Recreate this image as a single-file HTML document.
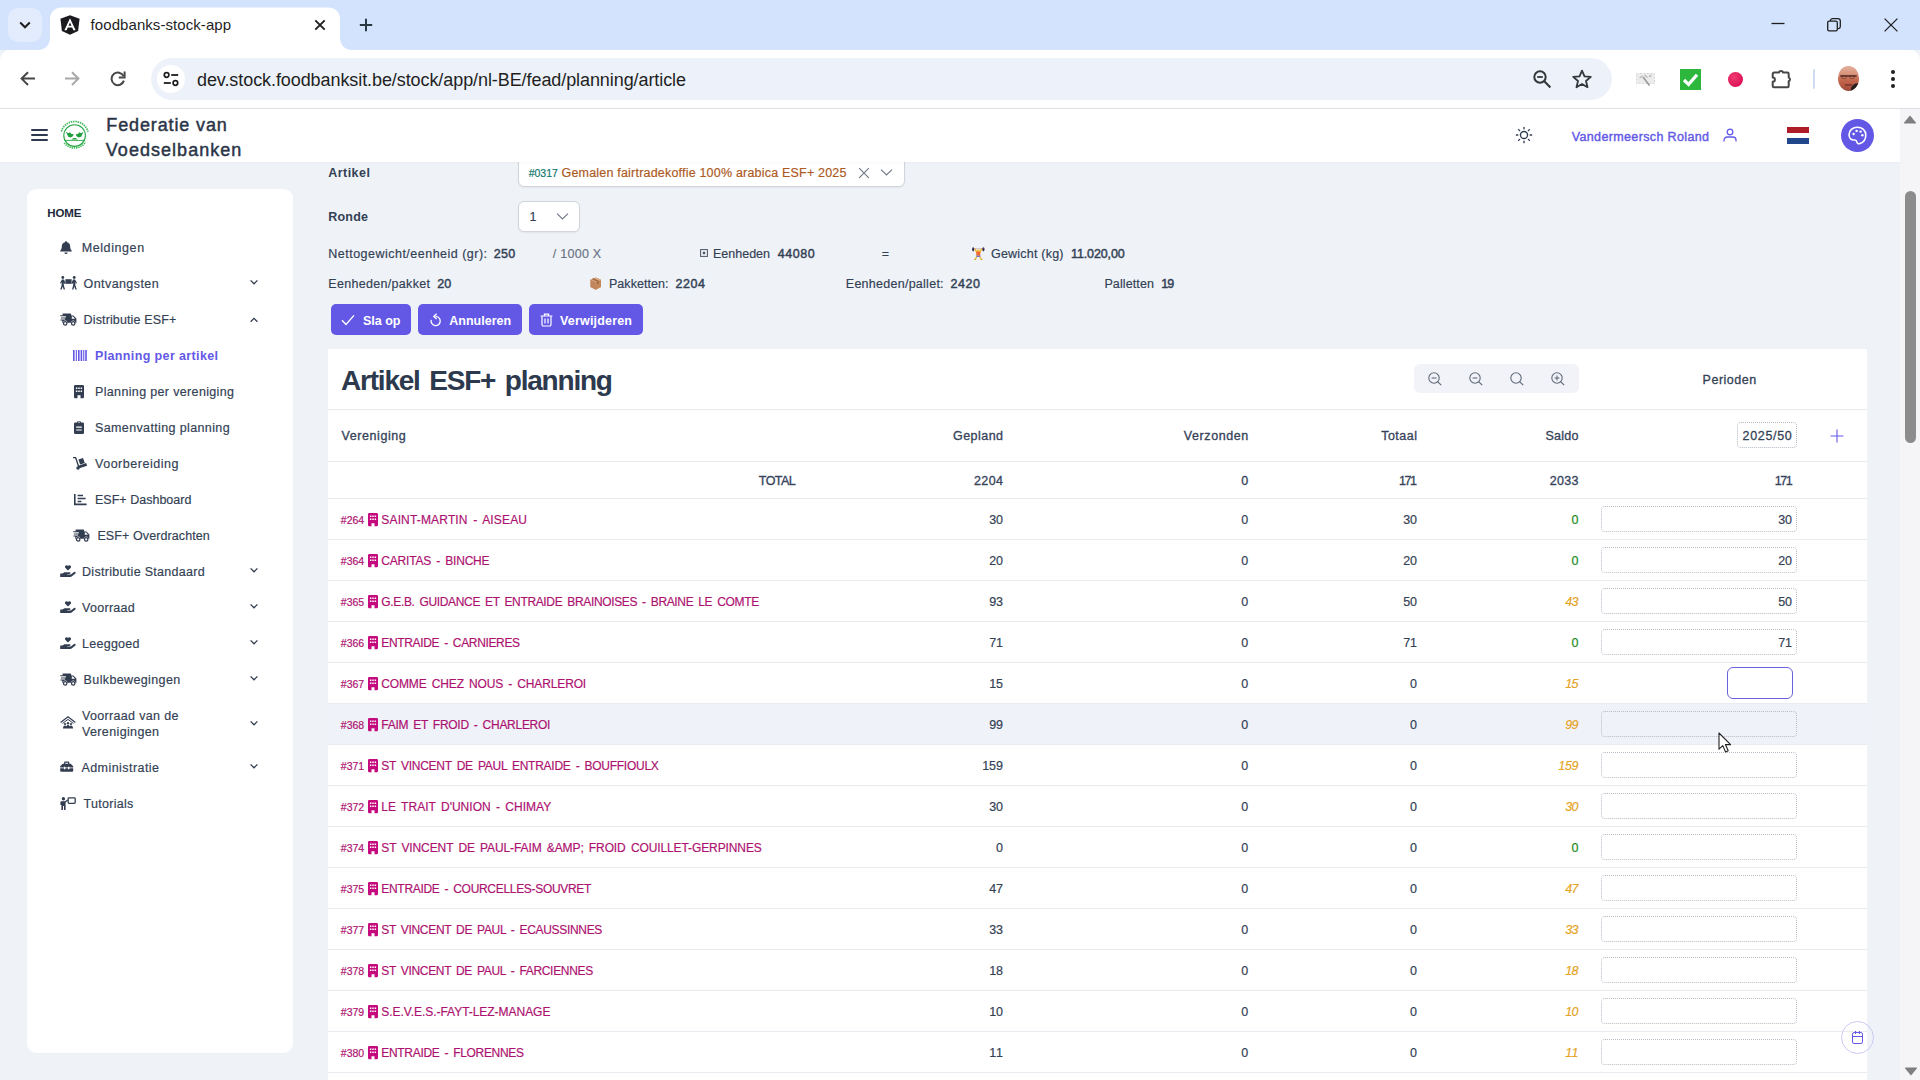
<!DOCTYPE html>
<html lang="nl"><head><meta charset="utf-8"><title>foodbanks-stock-app</title>
<style>
html,body{margin:0;padding:0}
body{width:1920px;height:1080px;overflow:hidden;position:relative;background:#eff3f8;font-family:"Liberation Sans", sans-serif;}
.a{position:absolute;box-sizing:border-box}
.t{position:absolute;white-space:pre;font-family:"Liberation Sans", sans-serif;}
svg{overflow:visible}
</style></head><body>
<div class="a" style="left:0px;top:0px;width:1920px;height:50px;background:#d3e3fd;"></div>
<div class="a" style="left:0px;top:50px;width:1920px;height:58px;background:#ffffff;border-radius:10px 10px 0 0;"></div>
<div class="a" style="left:0px;top:108px;width:1920px;height:1px;background:#dcdfe4;"></div>
<div class="a" style="left:8px;top:8px;width:34px;height:34px;background:#e3ecfc;border-radius:10px;"></div>
<svg class="a" style="left:18px;top:19px;" width="14" height="12" viewBox="0 0 14 12"><path d="M2.2 3.5 L7 8.3 L11.8 3.5" fill="none" stroke="#1f1f1f" stroke-width="2" stroke-linecap="butt" stroke-linejoin="miter"/></svg>
<svg class="a" style="left:38px;top:7px;" width="316" height="43" viewBox="0 0 316 43"><path d="M0 43 C7 43 12 38 12 31 L12 12 C12 5 17 0.5 24 0.5 L290 0.5 C297 0.5 302 5 302 12 L302 31 C302 38 307 43 314 43 Z" fill="#ffffff"/></svg>
<svg class="a" style="left:60px;top:15px;" width="20" height="20" viewBox="0 0 20 20"><path d="M10 0.3 L19.6 3.7 L18.1 16 L10 19.8 L1.9 16 L0.4 3.7 Z" fill="#1b1b1f"/><path d="M10 3.2 L4.4 15.3 H6.6 L7.8 12.4 H12.2 L13.4 15.3 H15.6 Z M10 7.4 L11.5 10.7 H8.5 Z" fill="#fff" fill-rule="evenodd"/></svg>
<span class="t" style="left:90.60px;top:15px;font-size:15px;line-height:19px;color:#1f1f1f;letter-spacing:0.069px;">foodbanks-stock-app</span>
<svg class="a" style="left:314px;top:19px;" width="12" height="12" viewBox="0 0 12 12"><path d="M1.3 1.3 L10.7 10.7 M10.7 1.3 L1.3 10.7" stroke="#1f1f1f" stroke-width="1.9" fill="none"/></svg>
<svg class="a" style="left:359px;top:18px;" width="14" height="14" viewBox="0 0 14 14"><path d="M7 0.8 V13.2 M0.8 7 H13.2" stroke="#2b3a42" stroke-width="2" fill="none"/></svg>
<svg class="a" style="left:1771px;top:17px;" width="14" height="12" viewBox="0 0 14 12"><path d="M0.5 6.5 H13.5" stroke="#1f1f1f" stroke-width="1.3" fill="none"/></svg>
<svg class="a" style="left:1826.8px;top:18px;" width="14" height="14" viewBox="0 0 14 14"><rect x="0.7" y="3.2" width="9.6" height="9.6" rx="1.4" fill="none" stroke="#1f1f1f" stroke-width="1.3"/><path d="M3.4 3 V2.6 A2 2 0 0 1 5.4 0.7 H11 A2.3 2.3 0 0 1 13.3 3 V8.6 A2 2 0 0 1 11.4 10.6 H10.6" fill="none" stroke="#1f1f1f" stroke-width="1.3"/></svg>
<svg class="a" style="left:1884px;top:18px;" width="14" height="14" viewBox="0 0 14 14"><path d="M0.6 0.6 L13.4 13.4 M13.4 0.6 L0.6 13.4" stroke="#1f1f1f" stroke-width="1.3" fill="none"/></svg>
<svg class="a" style="left:20px;top:71px;" width="16" height="16" viewBox="0 0 16 16"><path d="M15 7.6 H2.2 M8 1.2 L1.6 7.6 L8 14" fill="none" stroke="#474747" stroke-width="2" stroke-linejoin="miter"/></svg>
<svg class="a" style="left:64px;top:71px;" width="16" height="16" viewBox="0 0 16 16"><path d="M1 7.6 H13.8 M8 1.2 L14.4 7.6 L8 14" fill="none" stroke="#a8a8a8" stroke-width="2"/></svg>
<svg class="a" style="left:110px;top:71px;" width="16" height="16" viewBox="0 0 16 16"><path d="M13.6 5.2 A6.3 6.3 0 1 0 13.9 9.6" fill="none" stroke="#474747" stroke-width="2"/><path d="M14.6 0.6 V6.4 H8.8" fill="none" stroke="#474747" stroke-width="2"/></svg>
<div class="a" style="left:151px;top:58px;width:1461px;height:42px;background:#edf2fa;border-radius:21px;"></div>
<div class="a" style="left:157px;top:65px;width:28px;height:28px;background:#ffffff;border-radius:14px;"></div>
<svg class="a" style="left:163px;top:71px;" width="16" height="16" viewBox="0 0 16 16"><circle cx="3.6" cy="4" r="2.3" fill="none" stroke="#1f1f1f" stroke-width="1.7"/><path d="M8.2 4 H15.2" stroke="#1f1f1f" stroke-width="1.8"/><circle cx="12.4" cy="12" r="2.3" fill="none" stroke="#1f1f1f" stroke-width="1.7"/><path d="M0.8 12 H7.8" stroke="#1f1f1f" stroke-width="1.8"/></svg>
<span class="t" style="left:197.00px;top:69px;font-size:18px;line-height:22px;color:#1f1f1f;letter-spacing:-0.081px;">dev.stock.foodbanksit.be/stock/app/nl-BE/fead/planning/article</span>
<svg class="a" style="left:1532px;top:69px;" width="20" height="20" viewBox="0 0 20 20"><circle cx="8" cy="8" r="5.7" fill="none" stroke="#33363b" stroke-width="2"/><path d="M12.3 12.3 L18.4 18.4" stroke="#33363b" stroke-width="2.1"/><path d="M5.2 8 H10.8" stroke="#33363b" stroke-width="1.8"/></svg>
<svg class="a" style="left:1572px;top:69px;" width="20" height="20" viewBox="0 0 20 20"><path d="M10 1.6 L12.5 7.4 L18.8 7.9 L14 12 L15.5 18.2 L10 14.9 L4.5 18.2 L6 12 L1.2 7.9 L7.5 7.4 Z" fill="none" stroke="#33363b" stroke-width="1.8" stroke-linejoin="round"/></svg>
<svg class="a" style="left:1636px;top:72px;" width="20" height="15" viewBox="0 0 20 15"><rect x="0.5" y="1.5" width="18" height="10" fill="#ececec" stroke="#d6d6d6" stroke-width="1" stroke-dasharray="2 1.5"/><path d="M7 5 L13.5 13.5" stroke="#9a9a9a" stroke-width="1.6"/><path d="M3.5 6 L6.5 4 M8.5 3 L11.5 5.5 M13 4.5 L15.5 3.5" stroke="#b9b9b9" stroke-width="1.4"/></svg>
<svg class="a" style="left:1680px;top:69px;" width="21" height="21" viewBox="0 0 21 21"><rect width="21" height="21" fill="#2db83d"/><path d="M4 11 L8.6 15.4 L17 5.8" fill="none" stroke="#fff" stroke-width="3.2"/></svg>
<div class="a" style="left:1727.5px;top:71.5px;width:15.6px;height:15.6px;background:radial-gradient(circle at 40% 35%, #f03a72, #dd1457 70%);border-radius:50%;"></div>
<svg class="a" style="left:1770px;top:67.6px;" width="22" height="22" viewBox="0 0 22 22"><path d="M4 4.6 H8.8 A2.3 2.3 0 0 1 13.2 4.6 H17.4 A1.3 1.3 0 0 1 18.7 5.9 V9.6 A1.9 1.9 0 0 1 18.7 13.2 V18 A1.3 1.3 0 0 1 17.4 19.3 H4 A1.3 1.3 0 0 1 2.7 18 V13.8 A2.2 2.2 0 0 0 2.7 9.4 V5.9 A1.3 1.3 0 0 1 4 4.6 Z" fill="none" stroke="#474747" stroke-width="2" stroke-linejoin="round"/></svg>
<div class="a" style="left:1813px;top:69px;width:2px;height:20px;background:#d0dcf4;border-radius:1px;"></div>
<div class="a" style="left:1837.5px;top:66px;width:21px;height:25px;border-radius:48% 48% 50% 50%;overflow:hidden;background:linear-gradient(180deg,#e2b09c 0%,#d9957e 30%,#c4694f 55%,#b85a45 75%,#9c4a3a 100%);"><div class="a" style="left:2px;top:8.5px;width:17px;height:2.4px;background:#5a2e25;opacity:.8;border-radius:1px;"></div><div class="a" style="left:3px;top:9px;width:6px;height:4px;border:1px solid #5a2e25;opacity:.55;border-radius:2px;"></div><div class="a" style="left:11px;top:9px;width:6px;height:4px;border:1px solid #5a2e25;opacity:.55;border-radius:2px;"></div><div class="a" style="left:7px;top:18px;width:7px;height:1.6px;background:#7a2f2a;opacity:.7;"></div><div class="a" style="left:13px;top:17px;width:12px;height:12px;background:#26201f;border-radius:60% 0 0 0;transform:rotate(8deg);"></div></div>
<div class="a" style="left:1890.7px;top:69.7px;width:4px;height:4px;background:#1f1f1f;border-radius:50%;"></div>
<div class="a" style="left:1890.7px;top:76.6px;width:4px;height:4px;background:#1f1f1f;border-radius:50%;"></div>
<div class="a" style="left:1890.7px;top:83.5px;width:4px;height:4px;background:#1f1f1f;border-radius:50%;"></div>
<div class="a" style="left:518px;top:150px;width:387px;height:37px;background:#ffffff;border:1px solid #d1d5db;border-radius:6px;box-shadow:0 1px 2px rgba(18,18,23,.06);"></div>
<div class="a" style="left:0px;top:109px;width:1900px;height:53px;background:#ffffff;box-shadow:0 1px 2px rgba(0,0,0,.03);"></div>
<div class="a" style="left:1900px;top:109px;width:20px;height:971px;background:#f5f5f8;"></div>
<svg class="a" style="left:1903px;top:115px;" width="14" height="9" viewBox="0 0 14 9"><path d="M7 1.4 L12.4 8 H1.6 Z" fill="#7f7f7f" stroke="#7f7f7f" stroke-width="1.2" stroke-linejoin="round"/></svg>
<svg class="a" style="left:1903.6px;top:1066.6px;" width="14" height="9" viewBox="0 0 14 9"><path d="M7 7.6 L12.4 1 H1.6 Z" fill="#7f7f7f" stroke="#7f7f7f" stroke-width="1.2" stroke-linejoin="round"/></svg>
<div class="a" style="left:1905px;top:190.5px;width:11px;height:252px;background:#8c8c8c;border-radius:5.5px;"></div>
<div class="a" style="left:31px;top:129px;width:17px;height:1.5px;background:#2f3a4f;border-radius:1px;"></div>
<div class="a" style="left:31px;top:134px;width:17px;height:1.5px;background:#2f3a4f;border-radius:1px;"></div>
<div class="a" style="left:31px;top:139px;width:17px;height:1.5px;background:#2f3a4f;border-radius:1px;"></div>
<svg class="a" style="left:59px;top:120px;" width="32" height="32" viewBox="0 0 32 32"><circle cx="15.6" cy="15.6" r="10.8" fill="none" stroke="#27a844" stroke-width="1.1"/><path d="M2.4 11.4 A13.8 13.8 0 0 1 29 11.8" fill="none" stroke="#46b860" stroke-width="1.7" stroke-dasharray="1.5 0.8"/><path d="M5.2 23 A13.3 13.3 0 0 0 26.6 22" fill="none" stroke="#46b860" stroke-width="1.7" stroke-dasharray="1.4 0.8"/><path d="M5.6 20.4 H25.6" stroke="#27a844" stroke-width="0.9"/><path d="M6.8 11.8 L9.4 13.2 L11 12.2 L12.2 13.8 L14.8 14.4 L13.6 16.6 L11.6 17.4 L9.2 16.8 L8.2 14.6 Z" fill="#1f9e3c"/><path d="M24.6 11.8 L22 13.2 L20.4 12.2 L19.2 13.8 L16.6 14.4 L17.8 16.6 L19.8 17.4 L22.2 16.8 L23.2 14.6 Z" fill="#1f9e3c"/><path d="M12.6 19.6 C13.4 17.4 17.8 17.4 18.6 19.6 Z" fill="#1f9e3c"/></svg>
<span class="t" style="left:106.30px;top:114px;font-size:18px;line-height:22px;color:#2b3547;letter-spacing:0.868px;-webkit-text-stroke:0.45px #2b3547;">Federatie van</span>
<span class="t" style="left:105.80px;top:139px;font-size:18px;line-height:22px;color:#2b3547;letter-spacing:1.033px;-webkit-text-stroke:0.45px #2b3547;">Voedselbanken</span>
<svg class="a" style="left:1513.9px;top:124.6px;" width="20" height="20" viewBox="0 0 22 22"><circle cx="11" cy="11" r="3.9" fill="none" stroke="#2f3a4f" stroke-width="1.5"/><path d="M11 2.6 V4.2 M11 17.8 V19.4 M2.6 11 H4.2 M17.8 11 H19.4 M5.1 5.1 L6.2 6.2 M15.8 15.8 L16.9 16.9 M5.1 16.9 L6.2 15.8 M15.8 6.2 L16.9 5.1" stroke="#2f3a4f" stroke-width="1.5" stroke-linecap="round"/></svg>
<span class="t" style="left:1571.70px;top:129px;font-size:12.5px;line-height:16px;color:#6358e6;letter-spacing:0.363px;-webkit-text-stroke:0.4px #6358e6;">Vandermeersch Roland</span>
<svg class="a" style="left:1723px;top:128px;" width="14" height="14" viewBox="0 0 14 14"><circle cx="7" cy="4" r="2.8" fill="none" stroke="#6358e6" stroke-width="1.3"/><path d="M1 13.4 V12.2 A3.2 3.2 0 0 1 4.2 9 H9.8 A3.2 3.2 0 0 1 13 12.2 V13.4" fill="none" stroke="#6358e6" stroke-width="1.3"/></svg>
<div class="a" style="left:1787px;top:127px;width:22px;height:6px;background:#ae1c28;"></div>
<div class="a" style="left:1787px;top:133px;width:22px;height:5px;background:#ffffff;"></div>
<div class="a" style="left:1787px;top:138px;width:22px;height:6px;background:#21468b;"></div>
<div class="a" style="left:1841px;top:119px;width:33px;height:33px;background:#6358e6;border-radius:50%;"></div>
<svg class="a" style="left:1848px;top:126px;" width="19" height="19" viewBox="0 0 19 19"><path d="M9.4 1.2 C4.6 1.2 1 4.6 1 8.8 C1 12.4 3.6 14.4 6.2 14 C7.6 13.8 8.6 14.6 8.8 15.8 C9.1 17.4 10.4 18.2 12 17.6 C15.4 16.4 17.8 13 17.8 9 C17.8 4.4 14.2 1.2 9.4 1.2 Z" fill="none" stroke="#fff" stroke-width="1.6"/><circle cx="5.6" cy="8" r="1.2" fill="#fff"/><circle cx="8.6" cy="4.9" r="1.2" fill="#fff"/><circle cx="12.6" cy="5.6" r="1.2" fill="#fff"/><circle cx="14.4" cy="9.2" r="1.2" fill="#fff"/></svg>
<div class="a" style="left:27px;top:189px;width:266px;height:864px;background:#ffffff;border-radius:9px;box-shadow:0 1px 2px rgba(0,0,0,.02);"></div>
<span class="t" style="left:47.30px;top:206px;font-size:11.5px;line-height:14px;color:#1e293b;font-weight:700;letter-spacing:-0.167px;">HOME</span>
<svg class="a" style="left:60px;top:241px;" width="12" height="13" viewBox="0 0 12 13"><path d="M6 0.2 C6.6 0.2 7 0.6 7 1.2 C9 1.7 10.2 3.4 10.2 5.4 C10.2 7.4 10.8 8.8 11.8 9.8 V10.6 H0.2 V9.8 C1.2 8.8 1.8 7.4 1.8 5.4 C1.8 3.4 3 1.7 5 1.2 C5 0.6 5.4 0.2 6 0.2 Z M4.4 11.4 H7.6 A1.6 1.6 0 0 1 4.4 11.4 Z" fill="#333d50"/></svg>
<span class="t" style="left:81.70px;top:240px;font-size:12.5px;line-height:16px;color:#334155;letter-spacing:0.589px;-webkit-text-stroke:0.18px #334155;">Meldingen</span>
<svg class="a" style="left:59.6px;top:276.4px;" width="17" height="14" viewBox="0 0 17 14"><circle cx="2.8" cy="1.5" r="1.4" fill="#333d50"/><circle cx="14.2" cy="1.5" r="1.4" fill="#333d50"/><rect x="5.4" y="3.2" width="6.2" height="4.6" fill="#333d50"/><path d="M2 3.6 H4 L5.6 7.4 L4.6 8 L3.8 6.6 V9 L5 13.6 H3.6 L2.8 10.4 L1.6 13.6 H0.2 L1.6 9.4 V6 L0.8 7.6 L0 7 Z" fill="#333d50"/><path d="M15 3.6 H13 L11.4 7.4 L12.4 8 L13.2 6.6 V9 L12 13.6 H13.4 L14.2 10.4 L15.4 13.6 H16.8 L15.4 9.4 V6 L16.2 7.6 L17 7 Z" fill="#333d50"/></svg>
<span class="t" style="left:83.60px;top:276px;font-size:12.5px;line-height:16px;color:#334155;letter-spacing:0.411px;-webkit-text-stroke:0.18px #334155;">Ontvangsten</span>
<svg class="a" style="left:248.8px;top:278.0px;" width="10" height="8" viewBox="0 0 10 8"><path d="M1.6 2.4 L5 5.8 L8.4 2.4" fill="none" stroke="#333d50" stroke-width="1.3"/></svg>
<svg class="a" style="left:59.6px;top:313px;" width="17" height="13" viewBox="0 0 17 13"><path d="M2.6 0.4 H10.4 A0.8 0.8 0 0 1 11.2 1.2 V2.4 H13.4 L16.4 5.6 V9.8 H15.4 A2.2 2.2 0 0 0 11 9.8 H7.4 A2.2 2.2 0 0 0 3 9.8 H2.2 V7.6 H0.4 V6.6 H5 V5.4 H1 V4.4 H5.8 V3.2 H0.2 V2.2 H2.6 Z M11.8 3.6 V5.8 H15 L13 3.6 Z" fill="#333d50" fill-rule="evenodd"/><circle cx="5.2" cy="10.4" r="1.7" fill="none" stroke="#333d50" stroke-width="1.3"/><circle cx="13.2" cy="10.4" r="1.7" fill="none" stroke="#333d50" stroke-width="1.3"/></svg>
<span class="t" style="left:83.60px;top:312px;font-size:12.5px;line-height:16px;color:#334155;letter-spacing:0.130px;-webkit-text-stroke:0.18px #334155;">Distributie ESF+</span>
<svg class="a" style="left:248.8px;top:315.59999999999997px;" width="10" height="8" viewBox="0 0 10 8"><path d="M1.6 5.8 L5 2.4 L8.4 5.8" fill="none" stroke="#333d50" stroke-width="1.3"/></svg>
<svg class="a" style="left:59.6px;top:564.6px;" width="16" height="13" viewBox="0 0 16 13"><path d="M8 5.6 L5.2 2.8 A1.6 1.6 0 0 1 8 1 A1.6 1.6 0 0 1 10.8 2.8 Z" fill="#333d50"/><path d="M0.2 8.4 H2.6 L4.4 7.2 H9.6 A0.9 0.9 0 0 1 9.6 9 H7.2 V9.4 H10.8 L14 7 A1 1 0 0 1 15.4 8.4 L11.6 11.6 A2 2 0 0 1 10.4 12 H0.2 Z" fill="#333d50"/></svg>
<span class="t" style="left:82.00px;top:564px;font-size:12.5px;line-height:16px;color:#334155;letter-spacing:0.303px;-webkit-text-stroke:0.18px #334155;">Distributie Standaard</span>
<svg class="a" style="left:248.8px;top:566.0px;" width="10" height="8" viewBox="0 0 10 8"><path d="M1.6 2.4 L5 5.8 L8.4 2.4" fill="none" stroke="#333d50" stroke-width="1.3"/></svg>
<svg class="a" style="left:59.6px;top:600.6px;" width="16" height="13" viewBox="0 0 16 13"><path d="M8 5.6 L5.2 2.8 A1.6 1.6 0 0 1 8 1 A1.6 1.6 0 0 1 10.8 2.8 Z" fill="#333d50"/><path d="M0.2 8.4 H2.6 L4.4 7.2 H9.6 A0.9 0.9 0 0 1 9.6 9 H7.2 V9.4 H10.8 L14 7 A1 1 0 0 1 15.4 8.4 L11.6 11.6 A2 2 0 0 1 10.4 12 H0.2 Z" fill="#333d50"/></svg>
<span class="t" style="left:82.00px;top:600px;font-size:12.5px;line-height:16px;color:#334155;letter-spacing:0.295px;-webkit-text-stroke:0.18px #334155;">Voorraad</span>
<svg class="a" style="left:248.8px;top:602.0px;" width="10" height="8" viewBox="0 0 10 8"><path d="M1.6 2.4 L5 5.8 L8.4 2.4" fill="none" stroke="#333d50" stroke-width="1.3"/></svg>
<svg class="a" style="left:59.6px;top:636.6px;" width="16" height="13" viewBox="0 0 16 13"><path d="M8 5.6 L5.2 2.8 A1.6 1.6 0 0 1 8 1 A1.6 1.6 0 0 1 10.8 2.8 Z" fill="#333d50"/><path d="M0.2 8.4 H2.6 L4.4 7.2 H9.6 A0.9 0.9 0 0 1 9.6 9 H7.2 V9.4 H10.8 L14 7 A1 1 0 0 1 15.4 8.4 L11.6 11.6 A2 2 0 0 1 10.4 12 H0.2 Z" fill="#333d50"/></svg>
<span class="t" style="left:82.00px;top:636px;font-size:12.5px;line-height:16px;color:#334155;letter-spacing:0.268px;-webkit-text-stroke:0.18px #334155;">Leeggoed</span>
<svg class="a" style="left:248.8px;top:638.0px;" width="10" height="8" viewBox="0 0 10 8"><path d="M1.6 2.4 L5 5.8 L8.4 2.4" fill="none" stroke="#333d50" stroke-width="1.3"/></svg>
<svg class="a" style="left:59.6px;top:673px;" width="17" height="13" viewBox="0 0 17 13"><path d="M2.6 0.4 H10.4 A0.8 0.8 0 0 1 11.2 1.2 V2.4 H13.4 L16.4 5.6 V9.8 H15.4 A2.2 2.2 0 0 0 11 9.8 H7.4 A2.2 2.2 0 0 0 3 9.8 H2.2 V7.6 H0.4 V6.6 H5 V5.4 H1 V4.4 H5.8 V3.2 H0.2 V2.2 H2.6 Z M11.8 3.6 V5.8 H15 L13 3.6 Z" fill="#333d50" fill-rule="evenodd"/><circle cx="5.2" cy="10.4" r="1.7" fill="none" stroke="#333d50" stroke-width="1.3"/><circle cx="13.2" cy="10.4" r="1.7" fill="none" stroke="#333d50" stroke-width="1.3"/></svg>
<span class="t" style="left:83.60px;top:672px;font-size:12.5px;line-height:16px;color:#334155;letter-spacing:0.373px;-webkit-text-stroke:0.18px #334155;">Bulkbewegingen</span>
<svg class="a" style="left:248.8px;top:674.0px;" width="10" height="8" viewBox="0 0 10 8"><path d="M1.6 2.4 L5 5.8 L8.4 2.4" fill="none" stroke="#333d50" stroke-width="1.3"/></svg>
<svg class="a" style="left:60px;top:761px;" width="13.4" height="11.4" viewBox="0 0 15 12"><path d="M4.6 2.6 V1.4 A1.2 1.2 0 0 1 5.8 0.2 H9.2 A1.2 1.2 0 0 1 10.4 1.4 V2.6 H12 L14.8 5.6 V10.6 A1.2 1.2 0 0 1 13.6 11.8 H1.4 A1.2 1.2 0 0 1 0.2 10.6 V5.6 L3 2.6 Z M6 1.6 V2.6 H9 V1.6 Z M0.2 6.8 V7.8 H4.4 V8.8 H6 V7.8 H9 V8.8 H10.6 V7.8 H14.8 V6.8 H10.6 V6 H9 V6.8 H6 V6 H4.4 V6.8 Z" fill="#333d50" fill-rule="evenodd"/></svg>
<span class="t" style="left:81.40px;top:760px;font-size:12.5px;line-height:16px;color:#334155;letter-spacing:0.446px;-webkit-text-stroke:0.18px #334155;">Administratie</span>
<svg class="a" style="left:248.8px;top:762.0px;" width="10" height="8" viewBox="0 0 10 8"><path d="M1.6 2.4 L5 5.8 L8.4 2.4" fill="none" stroke="#333d50" stroke-width="1.3"/></svg>
<svg class="a" style="left:59.8px;top:796.6px;" width="16" height="13" viewBox="0 0 16 13"><circle cx="3.4" cy="1.8" r="1.7" fill="#333d50"/><path d="M1.2 4.2 H5 L7.4 2.6 L8 3.6 L5.6 5.6 V13 H4 V9 H3 V13 H1.4 V8 H0.4 V5 A0.9 0.9 0 0 1 1.2 4.2 Z" fill="#333d50"/><rect x="8.2" y="0.8" width="7" height="5.6" rx="0.8" fill="none" stroke="#333d50" stroke-width="1.3"/></svg>
<span class="t" style="left:83.60px;top:796px;font-size:12.5px;line-height:16px;color:#334155;letter-spacing:0.266px;-webkit-text-stroke:0.18px #334155;">Tutorials</span>
<svg class="a" style="left:59.6px;top:716.4px;" width="16" height="13" viewBox="0 0 16 13"><path d="M0.6 6.4 L8 0.8 L15.4 6.4" fill="none" stroke="#333d50" stroke-width="1.3"/><path d="M2.6 7.4 L8 3.4 L13.4 7.4" fill="none" stroke="#333d50" stroke-width="1"/><circle cx="5" cy="8" r="1.1" fill="#333d50"/><circle cx="8" cy="7.2" r="1.2" fill="#333d50"/><circle cx="11" cy="8" r="1.1" fill="#333d50"/><path d="M3 12.6 C3 10.4 4 9.6 5 9.6 C5.8 9.6 6.2 10 6.4 10.4 C6.8 9.4 7.4 9 8 9 C8.6 9 9.2 9.4 9.6 10.4 C9.8 10 10.2 9.6 11 9.6 C12 9.6 13 10.4 13 12.6 Z" fill="#333d50"/></svg>
<span class="t" style="left:82.00px;top:708px;font-size:12.5px;line-height:16px;color:#334155;letter-spacing:0.332px;-webkit-text-stroke:0.18px #334155;">Voorraad van de</span>
<span class="t" style="left:82.00px;top:724px;font-size:12.5px;line-height:16px;color:#334155;letter-spacing:0.365px;-webkit-text-stroke:0.18px #334155;">Verenigingen</span>
<svg class="a" style="left:248.8px;top:718.8px;" width="10" height="8" viewBox="0 0 10 8"><path d="M1.6 2.4 L5 5.8 L8.4 2.4" fill="none" stroke="#333d50" stroke-width="1.3"/></svg>
<svg class="a" style="left:73.3px;top:349.7px;" width="14" height="11" viewBox="0 0 14 11"><rect x="0" y="0" width="1.6" height="11" fill="#6358e6"/><rect x="2.8" y="0" width="1.1" height="11" fill="#6358e6"/><rect x="5.0" y="0" width="1.6" height="11" fill="#6358e6"/><rect x="7.6" y="0" width="1.6" height="11" fill="#6358e6"/><rect x="10.2" y="0" width="1.1" height="11" fill="#6358e6"/><rect x="12.2" y="0" width="1.6" height="11" fill="#6358e6"/></svg>
<span class="t" style="left:95.00px;top:348px;font-size:12.5px;line-height:16px;color:#6358e6;font-weight:700;letter-spacing:0.368px;">Planning per artikel</span>
<svg class="a" style="left:73.6px;top:385px;" width="10.0" height="13.2" viewBox="0 0 10 13.2"><path d="M1.2 0 H8.8 A1.2 1.2 0 0 1 10 1.2 V12 A1.2 1.2 0 0 1 8.8 13.2 H6.5 V10.2 H3.5 V13.2 H1.2 A1.2 1.2 0 0 1 0 12 V1.2 A1.2 1.2 0 0 1 1.2 0 Z M1.9 2.6 V4.1 H3.4 V2.6 Z M4.25 2.6 V4.1 H5.75 V2.6 Z M6.6 2.6 V4.1 H8.1 V2.6 Z M1.9 5.6 V7.1 H3.4 V5.6 Z M4.25 5.6 V7.1 H5.75 V5.6 Z M6.6 5.6 V7.1 H8.1 V5.6 Z " fill="#333d50" fill-rule="evenodd"/></svg>
<span class="t" style="left:95.00px;top:384px;font-size:12.5px;line-height:16px;color:#334155;letter-spacing:0.348px;-webkit-text-stroke:0.18px #334155;">Planning per vereniging</span>
<svg class="a" style="left:73.6px;top:421px;" width="10" height="13" viewBox="0 0 10 13"><path d="M1.2 1.6 H2.8 A2.2 1.6 0 0 1 7.2 1.6 H8.8 A1.2 1.2 0 0 1 10 2.8 V11.8 A1.2 1.2 0 0 1 8.8 13 H1.2 A1.2 1.2 0 0 1 0 11.8 V2.8 A1.2 1.2 0 0 1 1.2 1.6 Z M2.2 5.6 V6.8 H7.8 V5.6 Z M2.2 8.4 V9.6 H7.8 V8.4 Z M4.3 1.2 A0.7 0.7 0 0 0 5.7 1.2 A0.7 0.7 0 0 0 4.3 1.2 Z" fill="#333d50" fill-rule="evenodd"/></svg>
<span class="t" style="left:95.00px;top:420px;font-size:12.5px;line-height:16px;color:#334155;letter-spacing:0.371px;-webkit-text-stroke:0.18px #334155;">Samenvatting planning</span>
<svg class="a" style="left:72.6px;top:457px;" width="14" height="13" viewBox="0 0 14 13"><path d="M0 0.6 H2.6 L5.6 9.4 L12.8 7 L13.2 8.2 L6.2 10.6" fill="none" stroke="#333d50" stroke-width="1.4"/><circle cx="5" cy="11" r="1.7" fill="#333d50"/><path d="M5.4 2.6 L10 1 L11.8 6 L7.2 7.6 Z" fill="#333d50"/></svg>
<span class="t" style="left:95.00px;top:456px;font-size:12.5px;line-height:16px;color:#334155;letter-spacing:0.520px;-webkit-text-stroke:0.18px #334155;">Voorbereiding</span>
<svg class="a" style="left:73.6px;top:493.6px;" width="13" height="12" viewBox="0 0 13 12"><path d="M0.8 0 V10.4 H12.6" fill="none" stroke="#333d50" stroke-width="1.6"/><path d="M3.6 1.6 H9 M3.6 4.6 H11.6 M3.6 7.6 H7.4" stroke="#333d50" stroke-width="1.5"/></svg>
<span class="t" style="left:95.00px;top:492px;font-size:12.5px;line-height:16px;color:#334155;letter-spacing:0.013px;-webkit-text-stroke:0.18px #334155;">ESF+ Dashboard</span>
<svg class="a" style="left:73.4px;top:529px;" width="17" height="13" viewBox="0 0 17 13"><path d="M2.6 0.4 H10.4 A0.8 0.8 0 0 1 11.2 1.2 V2.4 H13.4 L16.4 5.6 V9.8 H15.4 A2.2 2.2 0 0 0 11 9.8 H7.4 A2.2 2.2 0 0 0 3 9.8 H2.2 V7.6 H0.4 V6.6 H5 V5.4 H1 V4.4 H5.8 V3.2 H0.2 V2.2 H2.6 Z M11.8 3.6 V5.8 H15 L13 3.6 Z" fill="#333d50" fill-rule="evenodd"/><circle cx="5.2" cy="10.4" r="1.7" fill="none" stroke="#333d50" stroke-width="1.3"/><circle cx="13.2" cy="10.4" r="1.7" fill="none" stroke="#333d50" stroke-width="1.3"/></svg>
<span class="t" style="left:97.40px;top:528px;font-size:12.5px;line-height:16px;color:#334155;letter-spacing:0.098px;-webkit-text-stroke:0.18px #334155;">ESF+ Overdrachten</span>
<span class="t" style="left:328.30px;top:165px;font-size:12.5px;line-height:16px;color:#334155;font-weight:700;letter-spacing:0.449px;">Artikel</span>
<span class="t" style="left:528.80px;top:166px;font-size:10.5px;line-height:14px;color:#0f766e;letter-spacing:-0.051px;-webkit-text-stroke:0.18px #0f766e;">#0317</span>
<span class="t" style="left:561.50px;top:165px;font-size:12.5px;line-height:16px;color:#ad5a1e;letter-spacing:0.200px;-webkit-text-stroke:0.18px #ad5a1e;">Gemalen fairtradekoffie 100% arabica ESF+ 2025</span>
<svg class="a" style="left:858px;top:167px;" width="12" height="12" viewBox="0 0 12 12"><path d="M1.2 1.2 L10.8 10.8 M10.8 1.2 L1.2 10.8" stroke="#737b88" stroke-width="1.2" fill="none"/></svg>
<svg class="a" style="left:880px;top:168px;" width="13" height="9" viewBox="0 0 13 9"><path d="M1 1.6 L6.5 7 L12 1.6" stroke="#737b88" stroke-width="1.2" fill="none"/></svg>
<span class="t" style="left:328.30px;top:209px;font-size:12.5px;line-height:16px;color:#334155;font-weight:700;letter-spacing:0.177px;">Ronde</span>
<div class="a" style="left:518px;top:201px;width:62px;height:31px;background:#ffffff;border:1px solid #d1d5db;border-radius:6px;box-shadow:0 1px 2px rgba(18,18,23,.06);"></div>
<span class="t" style="left:529.60px;top:209px;font-size:12.5px;line-height:16px;color:#334155;-webkit-text-stroke:0.18px #334155;">1</span>
<svg class="a" style="left:555.5px;top:212px;" width="13" height="9" viewBox="0 0 13 9"><path d="M1 1.6 L6.5 7 L12 1.6" stroke="#737b88" stroke-width="1.2" fill="none"/></svg>
<span class="t" style="left:328.30px;top:246px;font-size:12.5px;line-height:16px;color:#334155;letter-spacing:0.484px;-webkit-text-stroke:0.18px #334155;">Nettogewicht/eenheid (gr):</span>
<span class="t" style="left:493.80px;top:246px;font-size:12.5px;line-height:16px;color:#334155;letter-spacing:0.270px;-webkit-text-stroke:0.45px #334155;">250</span>
<span class="t" style="left:552.80px;top:246px;font-size:12.5px;line-height:16px;color:#6b7483;letter-spacing:0.260px;-webkit-text-stroke:0.18px #6b7483;">/ 1000 X</span>
<svg class="a" style="left:699.6px;top:249.4px;" width="8" height="8" viewBox="0 0 8 8"><rect x="0.6" y="0.6" width="6.8" height="6.8" fill="none" stroke="#4b5563" stroke-width="1"/><rect x="2.8" y="2.8" width="2.4" height="2.4" fill="#4b5563"/></svg>
<span class="t" style="left:713.00px;top:246px;font-size:12.5px;line-height:16px;color:#334155;-webkit-text-stroke:0.18px #334155;">Eenheden</span>
<span class="t" style="left:777.80px;top:246px;font-size:12.5px;line-height:16px;color:#334155;letter-spacing:0.559px;-webkit-text-stroke:0.45px #334155;">44080</span>
<span class="t" style="left:881.70px;top:246px;font-size:12.5px;line-height:16px;color:#334155;-webkit-text-stroke:0.18px #334155;">=</span>
<svg class="a" style="left:972px;top:246.8px;" width="12.6" height="13.2" viewBox="0 0 12.6 13.2"><path d="M1.2 1.7 H11.4" stroke="#b9b4c4" stroke-width="0.8"/><ellipse cx="1.2" cy="2.3" rx="1.1" ry="2.1" fill="#3b2d52"/><ellipse cx="11.4" cy="2.3" rx="1.1" ry="2.1" fill="#3b2d52"/><path d="M2.8 1.7 L5 5.6 M9.8 1.7 L7.6 5.6" stroke="#f0b731" stroke-width="1.5" fill="none"/><circle cx="6.3" cy="3.7" r="1.5" fill="#f6c24c"/><rect x="4.3" y="4.6" width="4" height="4.2" rx="0.6" fill="#ee6a28"/><rect x="4.1" y="8.6" width="4.4" height="1.5" fill="#7a78c4"/><path d="M4.7 9.8 L3.2 12.2 M7.9 9.8 L9.4 12.2" stroke="#e9bf3a" stroke-width="1.4" fill="none"/><path d="M2.2 12.5 H4.2 M8.4 12.5 H10.4" stroke="#d4ad2a" stroke-width="1.1"/></svg>
<span class="t" style="left:991.00px;top:246px;font-size:12.5px;line-height:16px;color:#334155;letter-spacing:0.213px;-webkit-text-stroke:0.18px #334155;">Gewicht (kg)</span>
<span class="t" style="left:1071.00px;top:246px;font-size:12.5px;line-height:16px;color:#334155;letter-spacing:-0.123px;-webkit-text-stroke:0.45px #334155;">11.020,00</span>
<span class="t" style="left:328.30px;top:276px;font-size:12.5px;line-height:16px;color:#334155;letter-spacing:0.313px;-webkit-text-stroke:0.18px #334155;">Eenheden/pakket</span>
<span class="t" style="left:437.20px;top:276px;font-size:12.5px;line-height:16px;color:#334155;letter-spacing:0.094px;-webkit-text-stroke:0.45px #334155;">20</span>
<svg class="a" style="left:589.8px;top:276.8px;" width="11.4" height="13.2" viewBox="0 0 11.4 13.2"><path d="M5.7 0.4 L11 2.8 V10 L5.7 12.8 L0.4 10 V2.8 Z" fill="#c98f66"/><path d="M5.7 5.2 L11 2.8 V10 L5.7 12.8 Z" fill="#c4895a"/><path d="M0.4 2.8 L5.7 5.2 L11 2.8 L5.7 0.4 Z" fill="#dcab80"/><path d="M2.6 1.8 L8 4.2 V7" fill="none" stroke="#9c6843" stroke-width="1.5"/><path d="M0.4 2.8 L5.7 5.2 V12.8 L0.4 10 Z" fill="#b97d5a" opacity="0.55"/></svg>
<span class="t" style="left:609.00px;top:276px;font-size:12.5px;line-height:16px;color:#334155;letter-spacing:0.036px;-webkit-text-stroke:0.18px #334155;">Pakketten:</span>
<span class="t" style="left:675.60px;top:276px;font-size:12.5px;line-height:16px;color:#334155;letter-spacing:0.529px;-webkit-text-stroke:0.45px #334155;">2204</span>
<span class="t" style="left:845.80px;top:276px;font-size:12.5px;line-height:16px;color:#334155;letter-spacing:0.264px;-webkit-text-stroke:0.18px #334155;">Eenheden/pallet:</span>
<span class="t" style="left:950.60px;top:276px;font-size:12.5px;line-height:16px;color:#334155;letter-spacing:0.529px;-webkit-text-stroke:0.45px #334155;">2420</span>
<span class="t" style="left:1104.40px;top:276px;font-size:12.5px;line-height:16px;color:#334155;letter-spacing:0.118px;-webkit-text-stroke:0.18px #334155;">Palletten</span>
<span class="t" style="left:1161.30px;top:276px;font-size:12.5px;line-height:16px;color:#334155;letter-spacing:-0.906px;-webkit-text-stroke:0.45px #334155;">19</span>
<div class="a" style="left:331px;top:304.2px;width:80px;height:30.4px;background:#6358e6;border-radius:5px;"></div>
<svg class="a" style="left:341px;top:313.5px" width="14" height="12" viewBox="0 0 14 12"><path d="M1 6.2 L5 10.4 L13 1.4" fill="none" stroke="#fff" stroke-width="1.4"/></svg>
<span class="t" style="left:363.00px;top:313px;font-size:12.5px;line-height:16px;color:#ffffff;font-weight:700;letter-spacing:-0.023px;">Sla op</span>
<div class="a" style="left:418px;top:304.2px;width:104px;height:30.4px;background:#6358e6;border-radius:5px;"></div>
<svg class="a" style="left:429px;top:312.5px" width="13" height="14" viewBox="0 0 13 14"><path d="M2.2 6.8 A4.6 4.6 0 1 0 6.6 3.4" fill="none" stroke="#fff" stroke-width="1.3"/><path d="M7.6 0.8 L4.8 3.4 L7.6 6" fill="none" stroke="#fff" stroke-width="1.3"/></svg>
<span class="t" style="left:449.20px;top:313px;font-size:12.5px;line-height:16px;color:#ffffff;font-weight:700;letter-spacing:0.023px;">Annuleren</span>
<div class="a" style="left:529px;top:304.2px;width:114px;height:30.4px;background:#6358e6;border-radius:5px;"></div>
<svg class="a" style="left:539.5px;top:312.5px" width="13" height="14" viewBox="0 0 13 14"><path d="M0.6 3 H12.4 M4.4 2.8 V1.2 H8.6 V2.8" fill="none" stroke="#fff" stroke-width="1.2"/><path d="M2 3.2 V11.6 A1.4 1.4 0 0 0 3.4 13 H9.6 A1.4 1.4 0 0 0 11 11.6 V3.2" fill="none" stroke="#fff" stroke-width="1.2"/><path d="M5 5.6 V10.4 M8 5.6 V10.4" stroke="#fff" stroke-width="1.2"/></svg>
<span class="t" style="left:560.00px;top:313px;font-size:12.5px;line-height:16px;color:#ffffff;font-weight:700;letter-spacing:0.181px;">Verwijderen</span>
<div class="a" style="left:328px;top:349px;width:1539px;height:731px;background:#ffffff;"></div>
<span class="t" style="left:341.00px;top:364px;font-size:28px;line-height:33px;color:#2d394d;font-weight:700;letter-spacing:-1.209px;word-spacing:3px;">Artikel ESF+ planning</span>
<div class="a" style="left:328px;top:409px;width:1539px;height:1px;background:#e8ebf0;"></div>
<div class="a" style="left:1414px;top:364px;width:165px;height:29px;background:#f1f3f8;border-radius:6px;"></div>
<svg class="a" style="left:1428.3px;top:371.6px;" width="14" height="14" viewBox="0 0 14 14"><circle cx="6" cy="6" r="5.2" fill="none" stroke="#5f6b7a" stroke-width="1.1"/><path d="M9.6 9.6 L13.2 13.2" stroke="#5f6b7a" stroke-width="1.2"/><path d="M3.6 6 H8.4" stroke="#5f6b7a" stroke-width="1.1"/></svg>
<svg class="a" style="left:1469.3px;top:371.6px;" width="14" height="14" viewBox="0 0 14 14"><circle cx="6" cy="6" r="5.2" fill="none" stroke="#5f6b7a" stroke-width="1.1"/><path d="M9.6 9.6 L13.2 13.2" stroke="#5f6b7a" stroke-width="1.2"/><path d="M3.6 6 H8.4" stroke="#5f6b7a" stroke-width="1.1"/></svg>
<svg class="a" style="left:1510.3px;top:371.6px;" width="14" height="14" viewBox="0 0 14 14"><circle cx="6" cy="6" r="5.2" fill="none" stroke="#5f6b7a" stroke-width="1.1"/><path d="M9.6 9.6 L13.2 13.2" stroke="#5f6b7a" stroke-width="1.2"/></svg>
<svg class="a" style="left:1551.3px;top:371.6px;" width="14" height="14" viewBox="0 0 14 14"><circle cx="6" cy="6" r="5.2" fill="none" stroke="#5f6b7a" stroke-width="1.1"/><path d="M9.6 9.6 L13.2 13.2" stroke="#5f6b7a" stroke-width="1.2"/><path d="M3.6 6 H8.4" stroke="#5f6b7a" stroke-width="1.1"/><path d="M6 3.6 V8.4" stroke="#5f6b7a" stroke-width="1.1"/></svg>
<span class="t" style="left:1702.60px;top:372px;font-size:12.5px;line-height:16px;color:#334155;letter-spacing:0.508px;-webkit-text-stroke:0.3px #334155;">Perioden</span>
<span class="t" style="left:341.40px;top:428px;font-size:12.5px;line-height:16px;color:#36435a;letter-spacing:0.591px;-webkit-text-stroke:0.32px #36435a;">Vereniging</span>
<span class="t" style="left:953.00px;top:428px;font-size:12.5px;line-height:16px;color:#36435a;letter-spacing:0.456px;-webkit-text-stroke:0.32px #36435a;">Gepland</span>
<span class="t" style="left:1183.80px;top:428px;font-size:12.5px;line-height:16px;color:#36435a;letter-spacing:0.590px;-webkit-text-stroke:0.32px #36435a;">Verzonden</span>
<span class="t" style="left:1381.20px;top:428px;font-size:12.5px;line-height:16px;color:#36435a;letter-spacing:0.488px;-webkit-text-stroke:0.32px #36435a;">Totaal</span>
<span class="t" style="left:1545.50px;top:428px;font-size:12.5px;line-height:16px;color:#36435a;letter-spacing:0.254px;-webkit-text-stroke:0.32px #36435a;">Saldo</span>
<div class="a" style="left:1737px;top:422px;width:60px;height:26px;background:#ffffff;border:1px dotted #b4bac4;border-radius:4px;"></div>
<span class="t" style="left:1742.60px;top:428px;font-size:12.5px;line-height:16px;color:#334155;letter-spacing:0.669px;-webkit-text-stroke:0.28px #334155;">2025/50</span>
<svg class="a" style="left:1829.5px;top:428.5px;" width="14" height="14" viewBox="0 0 14 14"><path d="M7 0.6 V13.4 M0.6 7 H13.4" stroke="#6358e6" stroke-width="1.1" fill="none"/></svg>
<div class="a" style="left:328px;top:461px;width:1539px;height:1px;background:#e8ebf0;"></div>
<span class="t" style="left:758.80px;top:473px;font-size:12.5px;line-height:16px;color:#36435a;letter-spacing:-0.535px;-webkit-text-stroke:0.32px #36435a;">TOTAL</span>
<span class="t" style="left:974.00px;top:473px;font-size:12.5px;line-height:16px;color:#36435a;letter-spacing:0.396px;-webkit-text-stroke:0.32px #36435a;">2204</span>
<span class="t" style="left:1241.35px;top:473px;font-size:12.5px;line-height:16px;color:#36435a;-webkit-text-stroke:0.32px #36435a;">0</span>
<span class="t" style="left:1399.00px;top:473px;font-size:12.5px;line-height:16px;color:#36435a;letter-spacing:-1.430px;-webkit-text-stroke:0.32px #36435a;">171</span>
<span class="t" style="left:1549.70px;top:473px;font-size:12.5px;line-height:16px;color:#36435a;letter-spacing:0.329px;-webkit-text-stroke:0.32px #36435a;">2033</span>
<span class="t" style="left:1774.74px;top:473px;font-size:12.5px;line-height:16px;color:#36435a;letter-spacing:-1.500px;-webkit-text-stroke:0.32px #36435a;">171</span>
<div class="a" style="left:328px;top:498px;width:1539px;height:1px;background:#e8ebf0;"></div>
<span class="t" style="left:340.80px;top:513px;font-size:10.5px;line-height:14px;color:#ad1170;letter-spacing:0.014px;-webkit-text-stroke:0.18px #ad1170;">#264</span>
<svg class="a" style="left:368.1px;top:512.6px;" width="10.0" height="13.2" viewBox="0 0 10 13.2"><path d="M1.2 0 H8.8 A1.2 1.2 0 0 1 10 1.2 V12 A1.2 1.2 0 0 1 8.8 13.2 H6.5 V10.2 H3.5 V13.2 H1.2 A1.2 1.2 0 0 1 0 12 V1.2 A1.2 1.2 0 0 1 1.2 0 Z M1.9 2.6 V4.1 H3.4 V2.6 Z M4.25 2.6 V4.1 H5.75 V2.6 Z M6.6 2.6 V4.1 H8.1 V2.6 Z M1.9 5.6 V7.1 H3.4 V5.6 Z M4.25 5.6 V7.1 H5.75 V5.6 Z M6.6 5.6 V7.1 H8.1 V5.6 Z " fill="#c40a7c" fill-rule="evenodd"/></svg>
<span class="t" style="left:381.30px;top:512px;font-size:12px;line-height:16px;color:#ad1170;letter-spacing:0.162px;-webkit-text-stroke:0.18px #ad1170;word-spacing:2px;">SAINT-MARTIN - AISEAU</span>
<span class="t" style="left:989.20px;top:512px;font-size:12.5px;line-height:16px;color:#334155;letter-spacing:-0.106px;-webkit-text-stroke:0.18px #334155;">30</span>
<span class="t" style="left:1241.35px;top:512px;font-size:12.5px;line-height:16px;color:#334155;-webkit-text-stroke:0.18px #334155;">0</span>
<span class="t" style="left:1403.20px;top:512px;font-size:12.5px;line-height:16px;color:#334155;letter-spacing:-0.106px;-webkit-text-stroke:0.18px #334155;">30</span>
<span class="t" style="left:1571.55px;top:512px;font-size:12.5px;line-height:16px;color:#1a8a1a;-webkit-text-stroke:0.18px #1a8a1a;">0</span>
<div class="a" style="left:1601px;top:506px;width:196px;height:26px;background:#ffffff;border:1px dotted #b7bcc6;border-radius:4px;"></div>
<span class="t" style="left:1778.20px;top:512px;font-size:12.5px;line-height:16px;color:#334155;letter-spacing:-0.106px;-webkit-text-stroke:0.18px #334155;">30</span>
<div class="a" style="left:328px;top:539px;width:1539px;height:1px;background:#e8ebf0;"></div>
<span class="t" style="left:340.80px;top:554px;font-size:10.5px;line-height:14px;color:#ad1170;letter-spacing:0.014px;-webkit-text-stroke:0.18px #ad1170;">#364</span>
<svg class="a" style="left:368.1px;top:553.6px;" width="10.0" height="13.2" viewBox="0 0 10 13.2"><path d="M1.2 0 H8.8 A1.2 1.2 0 0 1 10 1.2 V12 A1.2 1.2 0 0 1 8.8 13.2 H6.5 V10.2 H3.5 V13.2 H1.2 A1.2 1.2 0 0 1 0 12 V1.2 A1.2 1.2 0 0 1 1.2 0 Z M1.9 2.6 V4.1 H3.4 V2.6 Z M4.25 2.6 V4.1 H5.75 V2.6 Z M6.6 2.6 V4.1 H8.1 V2.6 Z M1.9 5.6 V7.1 H3.4 V5.6 Z M4.25 5.6 V7.1 H5.75 V5.6 Z M6.6 5.6 V7.1 H8.1 V5.6 Z " fill="#c40a7c" fill-rule="evenodd"/></svg>
<span class="t" style="left:381.30px;top:553px;font-size:12px;line-height:16px;color:#ad1170;letter-spacing:-0.188px;-webkit-text-stroke:0.18px #ad1170;word-spacing:2px;">CARITAS - BINCHE</span>
<span class="t" style="left:989.20px;top:553px;font-size:12.5px;line-height:16px;color:#334155;letter-spacing:-0.106px;-webkit-text-stroke:0.18px #334155;">20</span>
<span class="t" style="left:1241.35px;top:553px;font-size:12.5px;line-height:16px;color:#334155;-webkit-text-stroke:0.18px #334155;">0</span>
<span class="t" style="left:1403.20px;top:553px;font-size:12.5px;line-height:16px;color:#334155;letter-spacing:-0.106px;-webkit-text-stroke:0.18px #334155;">20</span>
<span class="t" style="left:1571.55px;top:553px;font-size:12.5px;line-height:16px;color:#1a8a1a;-webkit-text-stroke:0.18px #1a8a1a;">0</span>
<div class="a" style="left:1601px;top:547px;width:196px;height:26px;background:#ffffff;border:1px dotted #b7bcc6;border-radius:4px;"></div>
<span class="t" style="left:1778.20px;top:553px;font-size:12.5px;line-height:16px;color:#334155;letter-spacing:-0.106px;-webkit-text-stroke:0.18px #334155;">20</span>
<div class="a" style="left:328px;top:580px;width:1539px;height:1px;background:#e8ebf0;"></div>
<span class="t" style="left:340.80px;top:595px;font-size:10.5px;line-height:14px;color:#ad1170;letter-spacing:0.014px;-webkit-text-stroke:0.18px #ad1170;">#365</span>
<svg class="a" style="left:368.1px;top:594.6px;" width="10.0" height="13.2" viewBox="0 0 10 13.2"><path d="M1.2 0 H8.8 A1.2 1.2 0 0 1 10 1.2 V12 A1.2 1.2 0 0 1 8.8 13.2 H6.5 V10.2 H3.5 V13.2 H1.2 A1.2 1.2 0 0 1 0 12 V1.2 A1.2 1.2 0 0 1 1.2 0 Z M1.9 2.6 V4.1 H3.4 V2.6 Z M4.25 2.6 V4.1 H5.75 V2.6 Z M6.6 2.6 V4.1 H8.1 V2.6 Z M1.9 5.6 V7.1 H3.4 V5.6 Z M4.25 5.6 V7.1 H5.75 V5.6 Z M6.6 5.6 V7.1 H8.1 V5.6 Z " fill="#c40a7c" fill-rule="evenodd"/></svg>
<span class="t" style="left:381.30px;top:594px;font-size:12px;line-height:16px;color:#ad1170;letter-spacing:-0.351px;-webkit-text-stroke:0.18px #ad1170;word-spacing:2px;">G.E.B. GUIDANCE ET ENTRAIDE BRAINOISES - BRAINE LE COMTE</span>
<span class="t" style="left:989.20px;top:594px;font-size:12.5px;line-height:16px;color:#334155;letter-spacing:-0.106px;-webkit-text-stroke:0.18px #334155;">93</span>
<span class="t" style="left:1241.35px;top:594px;font-size:12.5px;line-height:16px;color:#334155;-webkit-text-stroke:0.18px #334155;">0</span>
<span class="t" style="left:1403.20px;top:594px;font-size:12.5px;line-height:16px;color:#334155;letter-spacing:-0.106px;-webkit-text-stroke:0.18px #334155;">50</span>
<span class="t" style="left:1565.30px;top:594px;font-size:12.5px;line-height:16px;color:#e6a323;font-style:italic;letter-spacing:-0.706px;-webkit-text-stroke:0.18px #e6a323;">43</span>
<div class="a" style="left:1601px;top:588px;width:196px;height:26px;background:#ffffff;border:1px dotted #b7bcc6;border-radius:4px;"></div>
<span class="t" style="left:1778.20px;top:594px;font-size:12.5px;line-height:16px;color:#334155;letter-spacing:-0.106px;-webkit-text-stroke:0.18px #334155;">50</span>
<div class="a" style="left:328px;top:621px;width:1539px;height:1px;background:#e8ebf0;"></div>
<span class="t" style="left:340.80px;top:636px;font-size:10.5px;line-height:14px;color:#ad1170;letter-spacing:0.014px;-webkit-text-stroke:0.18px #ad1170;">#366</span>
<svg class="a" style="left:368.1px;top:635.6px;" width="10.0" height="13.2" viewBox="0 0 10 13.2"><path d="M1.2 0 H8.8 A1.2 1.2 0 0 1 10 1.2 V12 A1.2 1.2 0 0 1 8.8 13.2 H6.5 V10.2 H3.5 V13.2 H1.2 A1.2 1.2 0 0 1 0 12 V1.2 A1.2 1.2 0 0 1 1.2 0 Z M1.9 2.6 V4.1 H3.4 V2.6 Z M4.25 2.6 V4.1 H5.75 V2.6 Z M6.6 2.6 V4.1 H8.1 V2.6 Z M1.9 5.6 V7.1 H3.4 V5.6 Z M4.25 5.6 V7.1 H5.75 V5.6 Z M6.6 5.6 V7.1 H8.1 V5.6 Z " fill="#c40a7c" fill-rule="evenodd"/></svg>
<span class="t" style="left:381.30px;top:635px;font-size:12px;line-height:16px;color:#ad1170;letter-spacing:-0.345px;-webkit-text-stroke:0.18px #ad1170;word-spacing:2px;">ENTRAIDE - CARNIERES</span>
<span class="t" style="left:989.20px;top:635px;font-size:12.5px;line-height:16px;color:#334155;letter-spacing:-0.106px;-webkit-text-stroke:0.18px #334155;">71</span>
<span class="t" style="left:1241.35px;top:635px;font-size:12.5px;line-height:16px;color:#334155;-webkit-text-stroke:0.18px #334155;">0</span>
<span class="t" style="left:1403.20px;top:635px;font-size:12.5px;line-height:16px;color:#334155;letter-spacing:-0.106px;-webkit-text-stroke:0.18px #334155;">71</span>
<span class="t" style="left:1571.55px;top:635px;font-size:12.5px;line-height:16px;color:#1a8a1a;-webkit-text-stroke:0.18px #1a8a1a;">0</span>
<div class="a" style="left:1601px;top:629px;width:196px;height:26px;background:#ffffff;border:1px dotted #b7bcc6;border-radius:4px;"></div>
<span class="t" style="left:1778.20px;top:635px;font-size:12.5px;line-height:16px;color:#334155;letter-spacing:-0.106px;-webkit-text-stroke:0.18px #334155;">71</span>
<div class="a" style="left:328px;top:662px;width:1539px;height:1px;background:#e8ebf0;"></div>
<span class="t" style="left:340.80px;top:677px;font-size:10.5px;line-height:14px;color:#ad1170;letter-spacing:0.014px;-webkit-text-stroke:0.18px #ad1170;">#367</span>
<svg class="a" style="left:368.1px;top:676.6px;" width="10.0" height="13.2" viewBox="0 0 10 13.2"><path d="M1.2 0 H8.8 A1.2 1.2 0 0 1 10 1.2 V12 A1.2 1.2 0 0 1 8.8 13.2 H6.5 V10.2 H3.5 V13.2 H1.2 A1.2 1.2 0 0 1 0 12 V1.2 A1.2 1.2 0 0 1 1.2 0 Z M1.9 2.6 V4.1 H3.4 V2.6 Z M4.25 2.6 V4.1 H5.75 V2.6 Z M6.6 2.6 V4.1 H8.1 V2.6 Z M1.9 5.6 V7.1 H3.4 V5.6 Z M4.25 5.6 V7.1 H5.75 V5.6 Z M6.6 5.6 V7.1 H8.1 V5.6 Z " fill="#c40a7c" fill-rule="evenodd"/></svg>
<span class="t" style="left:381.30px;top:676px;font-size:12px;line-height:16px;color:#ad1170;letter-spacing:-0.146px;-webkit-text-stroke:0.18px #ad1170;word-spacing:2px;">COMME CHEZ NOUS - CHARLEROI</span>
<span class="t" style="left:989.20px;top:676px;font-size:12.5px;line-height:16px;color:#334155;letter-spacing:-0.106px;-webkit-text-stroke:0.18px #334155;">15</span>
<span class="t" style="left:1241.35px;top:676px;font-size:12.5px;line-height:16px;color:#334155;-webkit-text-stroke:0.18px #334155;">0</span>
<span class="t" style="left:1410.05px;top:676px;font-size:12.5px;line-height:16px;color:#334155;-webkit-text-stroke:0.18px #334155;">0</span>
<span class="t" style="left:1565.30px;top:676px;font-size:12.5px;line-height:16px;color:#e6a323;font-style:italic;letter-spacing:-0.706px;-webkit-text-stroke:0.18px #e6a323;">15</span>
<div class="a" style="left:1727px;top:667px;width:66px;height:32px;background:#ffffff;border:1.2px solid #6a60de;border-radius:6px;"></div>
<div class="a" style="left:328px;top:703px;width:1539px;height:1px;background:#e8ebf0;"></div>
<div class="a" style="left:328px;top:704px;width:1539px;height:40px;background:#eff2f8;"></div>
<span class="t" style="left:340.80px;top:718px;font-size:10.5px;line-height:14px;color:#ad1170;letter-spacing:0.014px;-webkit-text-stroke:0.18px #ad1170;">#368</span>
<svg class="a" style="left:368.1px;top:717.6px;" width="10.0" height="13.2" viewBox="0 0 10 13.2"><path d="M1.2 0 H8.8 A1.2 1.2 0 0 1 10 1.2 V12 A1.2 1.2 0 0 1 8.8 13.2 H6.5 V10.2 H3.5 V13.2 H1.2 A1.2 1.2 0 0 1 0 12 V1.2 A1.2 1.2 0 0 1 1.2 0 Z M1.9 2.6 V4.1 H3.4 V2.6 Z M4.25 2.6 V4.1 H5.75 V2.6 Z M6.6 2.6 V4.1 H8.1 V2.6 Z M1.9 5.6 V7.1 H3.4 V5.6 Z M4.25 5.6 V7.1 H5.75 V5.6 Z M6.6 5.6 V7.1 H8.1 V5.6 Z " fill="#c40a7c" fill-rule="evenodd"/></svg>
<span class="t" style="left:381.30px;top:717px;font-size:12px;line-height:16px;color:#ad1170;letter-spacing:-0.279px;-webkit-text-stroke:0.18px #ad1170;word-spacing:2px;">FAIM ET FROID - CHARLEROI</span>
<span class="t" style="left:989.20px;top:717px;font-size:12.5px;line-height:16px;color:#334155;letter-spacing:-0.106px;-webkit-text-stroke:0.18px #334155;">99</span>
<span class="t" style="left:1241.35px;top:717px;font-size:12.5px;line-height:16px;color:#334155;-webkit-text-stroke:0.18px #334155;">0</span>
<span class="t" style="left:1410.05px;top:717px;font-size:12.5px;line-height:16px;color:#334155;-webkit-text-stroke:0.18px #334155;">0</span>
<span class="t" style="left:1565.30px;top:717px;font-size:12.5px;line-height:16px;color:#e6a323;font-style:italic;letter-spacing:-0.706px;-webkit-text-stroke:0.18px #e6a323;">99</span>
<div class="a" style="left:1601px;top:711px;width:196px;height:26px;background:#eff2f8;border:1px dotted #b7bcc6;border-radius:4px;"></div>
<div class="a" style="left:328px;top:744px;width:1539px;height:1px;background:#e8ebf0;"></div>
<span class="t" style="left:340.80px;top:759px;font-size:10.5px;line-height:14px;color:#ad1170;letter-spacing:0.014px;-webkit-text-stroke:0.18px #ad1170;">#371</span>
<svg class="a" style="left:368.1px;top:758.6px;" width="10.0" height="13.2" viewBox="0 0 10 13.2"><path d="M1.2 0 H8.8 A1.2 1.2 0 0 1 10 1.2 V12 A1.2 1.2 0 0 1 8.8 13.2 H6.5 V10.2 H3.5 V13.2 H1.2 A1.2 1.2 0 0 1 0 12 V1.2 A1.2 1.2 0 0 1 1.2 0 Z M1.9 2.6 V4.1 H3.4 V2.6 Z M4.25 2.6 V4.1 H5.75 V2.6 Z M6.6 2.6 V4.1 H8.1 V2.6 Z M1.9 5.6 V7.1 H3.4 V5.6 Z M4.25 5.6 V7.1 H5.75 V5.6 Z M6.6 5.6 V7.1 H8.1 V5.6 Z " fill="#c40a7c" fill-rule="evenodd"/></svg>
<span class="t" style="left:381.30px;top:758px;font-size:12px;line-height:16px;color:#ad1170;letter-spacing:-0.259px;-webkit-text-stroke:0.18px #ad1170;word-spacing:2px;">ST VINCENT DE PAUL ENTRAIDE - BOUFFIOULX</span>
<span class="t" style="left:982.20px;top:758px;font-size:12.5px;line-height:16px;color:#334155;letter-spacing:-0.030px;-webkit-text-stroke:0.18px #334155;">159</span>
<span class="t" style="left:1241.35px;top:758px;font-size:12.5px;line-height:16px;color:#334155;-webkit-text-stroke:0.18px #334155;">0</span>
<span class="t" style="left:1410.05px;top:758px;font-size:12.5px;line-height:16px;color:#334155;-webkit-text-stroke:0.18px #334155;">0</span>
<span class="t" style="left:1558.30px;top:758px;font-size:12.5px;line-height:16px;color:#e6a323;font-style:italic;letter-spacing:-0.330px;-webkit-text-stroke:0.18px #e6a323;">159</span>
<div class="a" style="left:1601px;top:752px;width:196px;height:26px;background:#ffffff;border:1px dotted #b7bcc6;border-radius:4px;"></div>
<div class="a" style="left:328px;top:785px;width:1539px;height:1px;background:#e8ebf0;"></div>
<span class="t" style="left:340.80px;top:800px;font-size:10.5px;line-height:14px;color:#ad1170;letter-spacing:0.014px;-webkit-text-stroke:0.18px #ad1170;">#372</span>
<svg class="a" style="left:368.1px;top:799.6px;" width="10.0" height="13.2" viewBox="0 0 10 13.2"><path d="M1.2 0 H8.8 A1.2 1.2 0 0 1 10 1.2 V12 A1.2 1.2 0 0 1 8.8 13.2 H6.5 V10.2 H3.5 V13.2 H1.2 A1.2 1.2 0 0 1 0 12 V1.2 A1.2 1.2 0 0 1 1.2 0 Z M1.9 2.6 V4.1 H3.4 V2.6 Z M4.25 2.6 V4.1 H5.75 V2.6 Z M6.6 2.6 V4.1 H8.1 V2.6 Z M1.9 5.6 V7.1 H3.4 V5.6 Z M4.25 5.6 V7.1 H5.75 V5.6 Z M6.6 5.6 V7.1 H8.1 V5.6 Z " fill="#c40a7c" fill-rule="evenodd"/></svg>
<span class="t" style="left:381.30px;top:799px;font-size:12px;line-height:16px;color:#ad1170;letter-spacing:0.010px;-webkit-text-stroke:0.18px #ad1170;word-spacing:2px;">LE TRAIT D&#x27;UNION - CHIMAY</span>
<span class="t" style="left:989.20px;top:799px;font-size:12.5px;line-height:16px;color:#334155;letter-spacing:-0.106px;-webkit-text-stroke:0.18px #334155;">30</span>
<span class="t" style="left:1241.35px;top:799px;font-size:12.5px;line-height:16px;color:#334155;-webkit-text-stroke:0.18px #334155;">0</span>
<span class="t" style="left:1410.05px;top:799px;font-size:12.5px;line-height:16px;color:#334155;-webkit-text-stroke:0.18px #334155;">0</span>
<span class="t" style="left:1565.30px;top:799px;font-size:12.5px;line-height:16px;color:#e6a323;font-style:italic;letter-spacing:-0.706px;-webkit-text-stroke:0.18px #e6a323;">30</span>
<div class="a" style="left:1601px;top:793px;width:196px;height:26px;background:#ffffff;border:1px dotted #b7bcc6;border-radius:4px;"></div>
<div class="a" style="left:328px;top:826px;width:1539px;height:1px;background:#e8ebf0;"></div>
<span class="t" style="left:340.80px;top:841px;font-size:10.5px;line-height:14px;color:#ad1170;letter-spacing:0.014px;-webkit-text-stroke:0.18px #ad1170;">#374</span>
<svg class="a" style="left:368.1px;top:840.6px;" width="10.0" height="13.2" viewBox="0 0 10 13.2"><path d="M1.2 0 H8.8 A1.2 1.2 0 0 1 10 1.2 V12 A1.2 1.2 0 0 1 8.8 13.2 H6.5 V10.2 H3.5 V13.2 H1.2 A1.2 1.2 0 0 1 0 12 V1.2 A1.2 1.2 0 0 1 1.2 0 Z M1.9 2.6 V4.1 H3.4 V2.6 Z M4.25 2.6 V4.1 H5.75 V2.6 Z M6.6 2.6 V4.1 H8.1 V2.6 Z M1.9 5.6 V7.1 H3.4 V5.6 Z M4.25 5.6 V7.1 H5.75 V5.6 Z M6.6 5.6 V7.1 H8.1 V5.6 Z " fill="#c40a7c" fill-rule="evenodd"/></svg>
<span class="t" style="left:381.30px;top:840px;font-size:12px;line-height:16px;color:#ad1170;letter-spacing:-0.105px;-webkit-text-stroke:0.18px #ad1170;word-spacing:2px;">ST VINCENT DE PAUL-FAIM &amp;AMP; FROID COUILLET-GERPINNES</span>
<span class="t" style="left:996.05px;top:840px;font-size:12.5px;line-height:16px;color:#334155;-webkit-text-stroke:0.18px #334155;">0</span>
<span class="t" style="left:1241.35px;top:840px;font-size:12.5px;line-height:16px;color:#334155;-webkit-text-stroke:0.18px #334155;">0</span>
<span class="t" style="left:1410.05px;top:840px;font-size:12.5px;line-height:16px;color:#334155;-webkit-text-stroke:0.18px #334155;">0</span>
<span class="t" style="left:1571.55px;top:840px;font-size:12.5px;line-height:16px;color:#1a8a1a;-webkit-text-stroke:0.18px #1a8a1a;">0</span>
<div class="a" style="left:1601px;top:834px;width:196px;height:26px;background:#ffffff;border:1px dotted #b7bcc6;border-radius:4px;"></div>
<div class="a" style="left:328px;top:867px;width:1539px;height:1px;background:#e8ebf0;"></div>
<span class="t" style="left:340.80px;top:882px;font-size:10.5px;line-height:14px;color:#ad1170;letter-spacing:0.014px;-webkit-text-stroke:0.18px #ad1170;">#375</span>
<svg class="a" style="left:368.1px;top:881.6px;" width="10.0" height="13.2" viewBox="0 0 10 13.2"><path d="M1.2 0 H8.8 A1.2 1.2 0 0 1 10 1.2 V12 A1.2 1.2 0 0 1 8.8 13.2 H6.5 V10.2 H3.5 V13.2 H1.2 A1.2 1.2 0 0 1 0 12 V1.2 A1.2 1.2 0 0 1 1.2 0 Z M1.9 2.6 V4.1 H3.4 V2.6 Z M4.25 2.6 V4.1 H5.75 V2.6 Z M6.6 2.6 V4.1 H8.1 V2.6 Z M1.9 5.6 V7.1 H3.4 V5.6 Z M4.25 5.6 V7.1 H5.75 V5.6 Z M6.6 5.6 V7.1 H8.1 V5.6 Z " fill="#c40a7c" fill-rule="evenodd"/></svg>
<span class="t" style="left:381.30px;top:881px;font-size:12px;line-height:16px;color:#ad1170;letter-spacing:-0.307px;-webkit-text-stroke:0.18px #ad1170;word-spacing:2px;">ENTRAIDE - COURCELLES-SOUVRET</span>
<span class="t" style="left:989.20px;top:881px;font-size:12.5px;line-height:16px;color:#334155;letter-spacing:-0.106px;-webkit-text-stroke:0.18px #334155;">47</span>
<span class="t" style="left:1241.35px;top:881px;font-size:12.5px;line-height:16px;color:#334155;-webkit-text-stroke:0.18px #334155;">0</span>
<span class="t" style="left:1410.05px;top:881px;font-size:12.5px;line-height:16px;color:#334155;-webkit-text-stroke:0.18px #334155;">0</span>
<span class="t" style="left:1565.30px;top:881px;font-size:12.5px;line-height:16px;color:#e6a323;font-style:italic;letter-spacing:-0.706px;-webkit-text-stroke:0.18px #e6a323;">47</span>
<div class="a" style="left:1601px;top:875px;width:196px;height:26px;background:#ffffff;border:1px dotted #b7bcc6;border-radius:4px;"></div>
<div class="a" style="left:328px;top:908px;width:1539px;height:1px;background:#e8ebf0;"></div>
<span class="t" style="left:340.80px;top:923px;font-size:10.5px;line-height:14px;color:#ad1170;letter-spacing:0.014px;-webkit-text-stroke:0.18px #ad1170;">#377</span>
<svg class="a" style="left:368.1px;top:922.6px;" width="10.0" height="13.2" viewBox="0 0 10 13.2"><path d="M1.2 0 H8.8 A1.2 1.2 0 0 1 10 1.2 V12 A1.2 1.2 0 0 1 8.8 13.2 H6.5 V10.2 H3.5 V13.2 H1.2 A1.2 1.2 0 0 1 0 12 V1.2 A1.2 1.2 0 0 1 1.2 0 Z M1.9 2.6 V4.1 H3.4 V2.6 Z M4.25 2.6 V4.1 H5.75 V2.6 Z M6.6 2.6 V4.1 H8.1 V2.6 Z M1.9 5.6 V7.1 H3.4 V5.6 Z M4.25 5.6 V7.1 H5.75 V5.6 Z M6.6 5.6 V7.1 H8.1 V5.6 Z " fill="#c40a7c" fill-rule="evenodd"/></svg>
<span class="t" style="left:381.30px;top:922px;font-size:12px;line-height:16px;color:#ad1170;letter-spacing:-0.318px;-webkit-text-stroke:0.18px #ad1170;word-spacing:2px;">ST VINCENT DE PAUL - ECAUSSINNES</span>
<span class="t" style="left:989.20px;top:922px;font-size:12.5px;line-height:16px;color:#334155;letter-spacing:-0.106px;-webkit-text-stroke:0.18px #334155;">33</span>
<span class="t" style="left:1241.35px;top:922px;font-size:12.5px;line-height:16px;color:#334155;-webkit-text-stroke:0.18px #334155;">0</span>
<span class="t" style="left:1410.05px;top:922px;font-size:12.5px;line-height:16px;color:#334155;-webkit-text-stroke:0.18px #334155;">0</span>
<span class="t" style="left:1565.30px;top:922px;font-size:12.5px;line-height:16px;color:#e6a323;font-style:italic;letter-spacing:-0.706px;-webkit-text-stroke:0.18px #e6a323;">33</span>
<div class="a" style="left:1601px;top:916px;width:196px;height:26px;background:#ffffff;border:1px dotted #b7bcc6;border-radius:4px;"></div>
<div class="a" style="left:328px;top:949px;width:1539px;height:1px;background:#e8ebf0;"></div>
<span class="t" style="left:340.80px;top:964px;font-size:10.5px;line-height:14px;color:#ad1170;letter-spacing:0.014px;-webkit-text-stroke:0.18px #ad1170;">#378</span>
<svg class="a" style="left:368.1px;top:963.6px;" width="10.0" height="13.2" viewBox="0 0 10 13.2"><path d="M1.2 0 H8.8 A1.2 1.2 0 0 1 10 1.2 V12 A1.2 1.2 0 0 1 8.8 13.2 H6.5 V10.2 H3.5 V13.2 H1.2 A1.2 1.2 0 0 1 0 12 V1.2 A1.2 1.2 0 0 1 1.2 0 Z M1.9 2.6 V4.1 H3.4 V2.6 Z M4.25 2.6 V4.1 H5.75 V2.6 Z M6.6 2.6 V4.1 H8.1 V2.6 Z M1.9 5.6 V7.1 H3.4 V5.6 Z M4.25 5.6 V7.1 H5.75 V5.6 Z M6.6 5.6 V7.1 H8.1 V5.6 Z " fill="#c40a7c" fill-rule="evenodd"/></svg>
<span class="t" style="left:381.30px;top:963px;font-size:12px;line-height:16px;color:#ad1170;letter-spacing:-0.324px;-webkit-text-stroke:0.18px #ad1170;word-spacing:2px;">ST VINCENT DE PAUL - FARCIENNES</span>
<span class="t" style="left:989.20px;top:963px;font-size:12.5px;line-height:16px;color:#334155;letter-spacing:-0.106px;-webkit-text-stroke:0.18px #334155;">18</span>
<span class="t" style="left:1241.35px;top:963px;font-size:12.5px;line-height:16px;color:#334155;-webkit-text-stroke:0.18px #334155;">0</span>
<span class="t" style="left:1410.05px;top:963px;font-size:12.5px;line-height:16px;color:#334155;-webkit-text-stroke:0.18px #334155;">0</span>
<span class="t" style="left:1565.30px;top:963px;font-size:12.5px;line-height:16px;color:#e6a323;font-style:italic;letter-spacing:-0.706px;-webkit-text-stroke:0.18px #e6a323;">18</span>
<div class="a" style="left:1601px;top:957px;width:196px;height:26px;background:#ffffff;border:1px dotted #b7bcc6;border-radius:4px;"></div>
<div class="a" style="left:328px;top:990px;width:1539px;height:1px;background:#e8ebf0;"></div>
<span class="t" style="left:340.80px;top:1005px;font-size:10.5px;line-height:14px;color:#ad1170;letter-spacing:0.014px;-webkit-text-stroke:0.18px #ad1170;">#379</span>
<svg class="a" style="left:368.1px;top:1004.6px;" width="10.0" height="13.2" viewBox="0 0 10 13.2"><path d="M1.2 0 H8.8 A1.2 1.2 0 0 1 10 1.2 V12 A1.2 1.2 0 0 1 8.8 13.2 H6.5 V10.2 H3.5 V13.2 H1.2 A1.2 1.2 0 0 1 0 12 V1.2 A1.2 1.2 0 0 1 1.2 0 Z M1.9 2.6 V4.1 H3.4 V2.6 Z M4.25 2.6 V4.1 H5.75 V2.6 Z M6.6 2.6 V4.1 H8.1 V2.6 Z M1.9 5.6 V7.1 H3.4 V5.6 Z M4.25 5.6 V7.1 H5.75 V5.6 Z M6.6 5.6 V7.1 H8.1 V5.6 Z " fill="#c40a7c" fill-rule="evenodd"/></svg>
<span class="t" style="left:381.30px;top:1004px;font-size:12px;line-height:16px;color:#ad1170;letter-spacing:-0.038px;-webkit-text-stroke:0.18px #ad1170;word-spacing:2px;">S.E.V.E.S.-FAYT-LEZ-MANAGE</span>
<span class="t" style="left:989.20px;top:1004px;font-size:12.5px;line-height:16px;color:#334155;letter-spacing:-0.106px;-webkit-text-stroke:0.18px #334155;">10</span>
<span class="t" style="left:1241.35px;top:1004px;font-size:12.5px;line-height:16px;color:#334155;-webkit-text-stroke:0.18px #334155;">0</span>
<span class="t" style="left:1410.05px;top:1004px;font-size:12.5px;line-height:16px;color:#334155;-webkit-text-stroke:0.18px #334155;">0</span>
<span class="t" style="left:1565.30px;top:1004px;font-size:12.5px;line-height:16px;color:#e6a323;font-style:italic;letter-spacing:-0.706px;-webkit-text-stroke:0.18px #e6a323;">10</span>
<div class="a" style="left:1601px;top:998px;width:196px;height:26px;background:#ffffff;border:1px dotted #b7bcc6;border-radius:4px;"></div>
<div class="a" style="left:328px;top:1031px;width:1539px;height:1px;background:#e8ebf0;"></div>
<span class="t" style="left:340.80px;top:1046px;font-size:10.5px;line-height:14px;color:#ad1170;letter-spacing:0.014px;-webkit-text-stroke:0.18px #ad1170;">#380</span>
<svg class="a" style="left:368.1px;top:1045.6px;" width="10.0" height="13.2" viewBox="0 0 10 13.2"><path d="M1.2 0 H8.8 A1.2 1.2 0 0 1 10 1.2 V12 A1.2 1.2 0 0 1 8.8 13.2 H6.5 V10.2 H3.5 V13.2 H1.2 A1.2 1.2 0 0 1 0 12 V1.2 A1.2 1.2 0 0 1 1.2 0 Z M1.9 2.6 V4.1 H3.4 V2.6 Z M4.25 2.6 V4.1 H5.75 V2.6 Z M6.6 2.6 V4.1 H8.1 V2.6 Z M1.9 5.6 V7.1 H3.4 V5.6 Z M4.25 5.6 V7.1 H5.75 V5.6 Z M6.6 5.6 V7.1 H8.1 V5.6 Z " fill="#c40a7c" fill-rule="evenodd"/></svg>
<span class="t" style="left:381.30px;top:1045px;font-size:12px;line-height:16px;color:#ad1170;letter-spacing:-0.315px;-webkit-text-stroke:0.18px #ad1170;word-spacing:2px;">ENTRAIDE - FLORENNES</span>
<span class="t" style="left:989.20px;top:1045px;font-size:12.5px;line-height:16px;color:#334155;letter-spacing:0.816px;-webkit-text-stroke:0.18px #334155;">11</span>
<span class="t" style="left:1241.35px;top:1045px;font-size:12.5px;line-height:16px;color:#334155;-webkit-text-stroke:0.18px #334155;">0</span>
<span class="t" style="left:1410.05px;top:1045px;font-size:12.5px;line-height:16px;color:#334155;-webkit-text-stroke:0.18px #334155;">0</span>
<span class="t" style="left:1565.30px;top:1045px;font-size:12.5px;line-height:16px;color:#e6a323;font-style:italic;letter-spacing:0.216px;-webkit-text-stroke:0.18px #e6a323;">11</span>
<div class="a" style="left:1601px;top:1039px;width:196px;height:26px;background:#ffffff;border:1px dotted #b7bcc6;border-radius:4px;"></div>
<div class="a" style="left:328px;top:1072px;width:1539px;height:1px;background:#e8ebf0;"></div>
<svg class="a" style="left:1718px;top:732px;" width="14" height="22" viewBox="0 0 14 22"><path d="M1 1 V17.2 L4.8 13.6 L7.6 20 L10.2 18.8 L7.4 12.6 H12.6 Z" fill="#ffffff" stroke="#222" stroke-width="1.1" stroke-linejoin="round"/></svg>
<div class="a" style="left:1841px;top:1021px;width:33px;height:33px;border:1px solid #cdc9f4;border-radius:50%;"></div>
<svg class="a" style="left:1852px;top:1031px;" width="11" height="13" viewBox="0 0 11 13"><rect x="0.5" y="1.5" width="10" height="11" rx="1.6" fill="none" stroke="#6358e6" stroke-width="1"/><path d="M0.5 5.5 H10.5 M3.5 0 V3 M7.5 0 V3" stroke="#6358e6" stroke-width="1" fill="none"/></svg>
</body></html>
